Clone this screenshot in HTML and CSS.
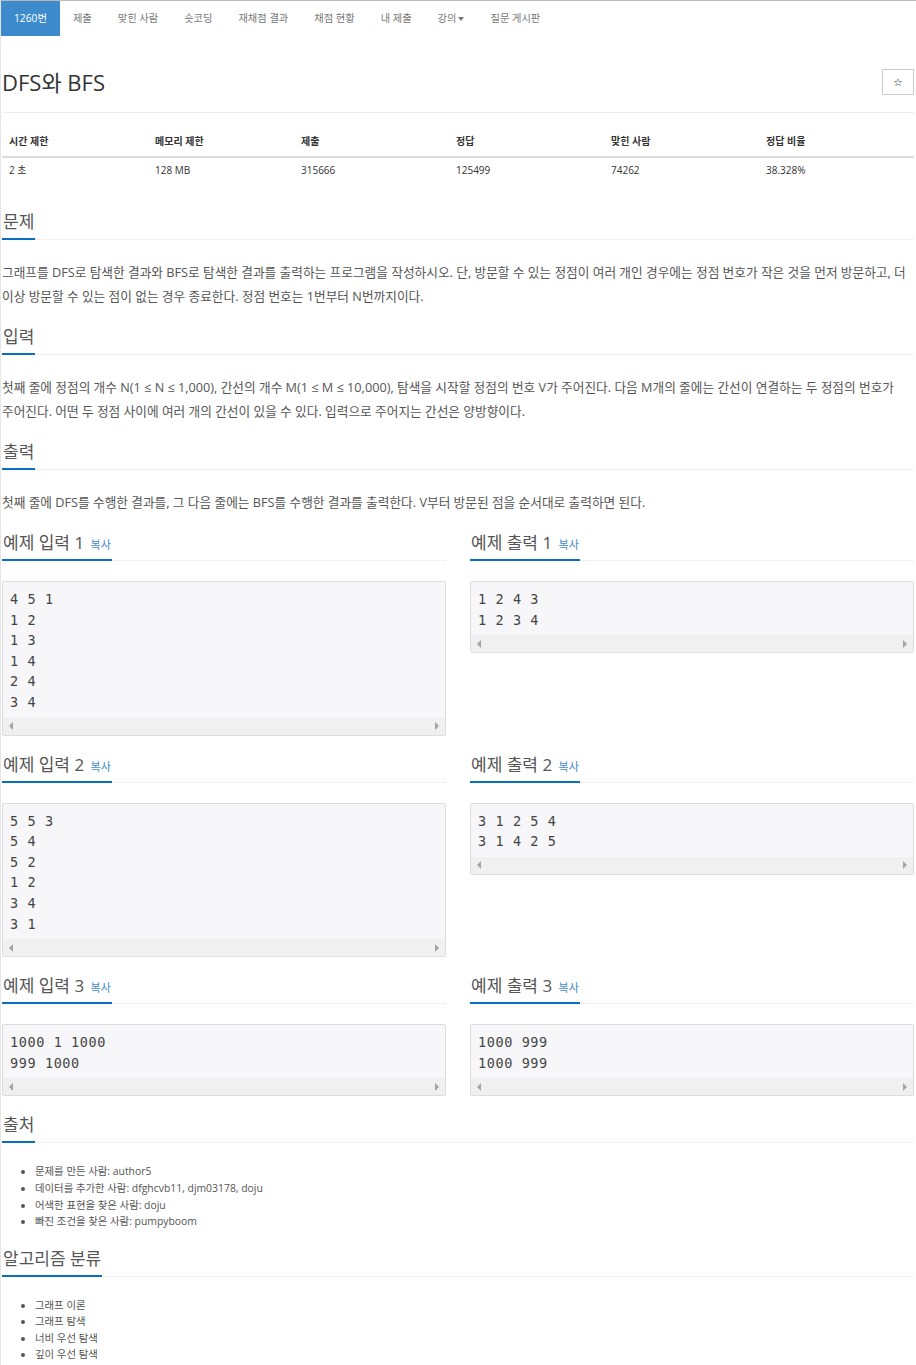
FILE: index.html
```html
<!DOCTYPE html>
<html>
<head>
  <title>1260번: DFS와 BFS</title>
  <meta charset="UTF-8">
  <meta name="viewport" content="width=device-width, initial-scale=1.0">
  <link rel="stylesheet" href="styles.css">
</head>
<body>
  <div class="topbar">
    <ul class="problem-menu">
      <li class="active"><a href="#">1260번</a></li>
      <li><a href="#">제출</a></li>
      <li><a href="#">맞힌 사람</a></li>
      <li><a href="#">숏코딩</a></li>
      <li><a href="#">재채점 결과</a></li>
      <li><a href="#">채점 현황</a></li>
      <li><a href="#">내 제출</a></li>
      <li><a href="#">강의<span class="caret"></span></a></li>
      <li><a href="#">질문 게시판</a></li>
    </ul>
  </div>

  <div class="container">
    <div class="page-header">
      <h1>DFS와 BFS</h1>
      <button type="button" class="star-btn">☆</button>
    </div>

    <table class="problem-info">
      <thead>
        <tr>
          <th class="c1">시간 제한</th>
          <th class="c2">메모리 제한</th>
          <th class="c3">제출</th>
          <th class="c4">정답</th>
          <th class="c5">맞힌 사람</th>
          <th>정답 비율</th>
        </tr>
      </thead>
      <tbody>
        <tr>
          <td>2 초</td>
          <td>128 MB</td>
          <td>315666</td>
          <td>125499</td>
          <td>74262</td>
          <td>38.328%</td>
        </tr>
      </tbody>
    </table>

    <section class="problem-section">
      <div class="headline"><h2>문제</h2></div>
      <p>그래프를 DFS로 탐색한 결과와 BFS로 탐색한 결과를 출력하는 프로그램을 작성하시오. 단, 방문할 수 있는 정점이 여러 개인 경우에는 정점 번호가 작은 것을 먼저 방문하고, 더 이상 방문할 수 있는 점이 없는 경우 종료한다. 정점 번호는 1번부터 N번까지이다.</p>
    </section>

    <section class="problem-section">
      <div class="headline"><h2>입력</h2></div>
      <p>첫째 줄에 정점의 개수 N(1 ≤ N ≤ 1,000), 간선의 개수 M(1 ≤ M ≤ 10,000), 탐색을 시작할 정점의 번호 V가 주어진다. 다음 M개의 줄에는 간선이 연결하는 두 정점의 번호가 주어진다. 어떤 두 정점 사이에 여러 개의 간선이 있을 수 있다. 입력으로 주어지는 간선은 양방향이다.</p>
    </section>

    <section class="problem-section">
      <div class="headline"><h2>출력</h2></div>
      <p>첫째 줄에 DFS를 수행한 결과를, 그 다음 줄에는 BFS를 수행한 결과를 출력한다. V부터 방문된 점을 순서대로 출력하면 된다.</p>
    </section>

    <div class="samples">
      <section class="problem-section">
        <div class="headline"><h2>예제 입력 1 <a href="#" class="copy">복사</a></h2></div>
        <div class="sample-box">
          <pre>4 5 1
1 2
1 3
1 4
2 4
3 4</pre>
          <div class="scrollbar"><span class="arrow-left"></span><span class="arrow-right"></span></div>
        </div>
      </section>
      <section class="problem-section">
        <div class="headline"><h2>예제 출력 1 <a href="#" class="copy">복사</a></h2></div>
        <div class="sample-box">
          <pre>1 2 4 3
1 2 3 4</pre>
          <div class="scrollbar"><span class="arrow-left"></span><span class="arrow-right"></span></div>
        </div>
      </section>

      <section class="problem-section">
        <div class="headline"><h2>예제 입력 2 <a href="#" class="copy">복사</a></h2></div>
        <div class="sample-box">
          <pre>5 5 3
5 4
5 2
1 2
3 4
3 1</pre>
          <div class="scrollbar"><span class="arrow-left"></span><span class="arrow-right"></span></div>
        </div>
      </section>
      <section class="problem-section">
        <div class="headline"><h2>예제 출력 2 <a href="#" class="copy">복사</a></h2></div>
        <div class="sample-box">
          <pre>3 1 2 5 4
3 1 4 2 5</pre>
          <div class="scrollbar"><span class="arrow-left"></span><span class="arrow-right"></span></div>
        </div>
      </section>

      <section class="problem-section">
        <div class="headline"><h2>예제 입력 3 <a href="#" class="copy">복사</a></h2></div>
        <div class="sample-box">
          <pre>1000 1 1000
999 1000</pre>
          <div class="scrollbar"><span class="arrow-left"></span><span class="arrow-right"></span></div>
        </div>
      </section>
      <section class="problem-section">
        <div class="headline"><h2>예제 출력 3 <a href="#" class="copy">복사</a></h2></div>
        <div class="sample-box">
          <pre>1000 999
1000 999</pre>
          <div class="scrollbar"><span class="arrow-left"></span><span class="arrow-right"></span></div>
        </div>
      </section>
    </div>

    <section class="problem-section">
      <div class="headline"><h2>출처</h2></div>
      <ul class="plain-list">
        <li>문제를 만든 사람: author5</li>
        <li>데이터를 추가한 사람: dfghcvb11, djm03178, doju</li>
        <li>어색한 표현을 찾은 사람: doju</li>
        <li>빠진 조건을 찾은 사람: pumpyboom</li>
      </ul>
    </section>

    <section class="problem-section">
      <div class="headline"><h2>알고리즘 분류</h2></div>
      <ul class="plain-list">
        <li>그래프 이론</li>
        <li>그래프 탐색</li>
        <li>너비 우선 탐색</li>
        <li>깊이 우선 탐색</li>
      </ul>
    </section>
  </div>
</body>
</html>
```

FILE: styles.css
```css
/* Reset styles */
* {
  margin: 0;
  padding: 0;
  box-sizing: border-box;
}

/* Base styles */
body {
  font-family: 'Open Sans', 'Noto Sans CJK KR', sans-serif;
  background-color: #fff;
  color: #555;
  font-size: 12.7px;
  line-height: 1.5;
  border-top: 1px solid #b8b8b8;
  border-left: 1px solid #e6e6e6;
}

a {
  text-decoration: none;
}

/* Top menu */
.topbar {
  height: 35px;
}

.problem-menu {
  list-style: none;
  display: flex;
  height: 35px;
}

.problem-menu a {
  display: block;
  height: 35px;
  line-height: 35px;
  padding: 0 13px;
  font-size: 10.25px;
  color: #777;
}

.problem-menu .active a {
  background-color: #3d8bcd;
  color: #fff;
}

.caret {
  display: inline-block;
  width: 0;
  height: 0;
  margin-left: 2px;
  vertical-align: middle;
  border-top: 4px solid #777;
  border-left: 3px solid transparent;
  border-right: 3px solid transparent;
}

/* Layout */
.container {
  padding: 0 2px 30px 1px;
}

.page-header {
  display: flex;
  align-items: center;
  justify-content: space-between;
  margin-top: 32px;
  padding-bottom: 16px;
  border-bottom: 1px solid #eee;
}

.page-header h1 {
  font-size: 22px;
  font-weight: 400;
  color: #333;
  line-height: 28px;
}

.star-btn {
  width: 32px;
  height: 26px;
  background-color: #fff;
  border: 1px solid #ccc;
  font-size: 11px;
  color: #333;
  font-family: 'DejaVu Sans', sans-serif;
  cursor: pointer;
}

/* Info table */
.problem-info {
  width: 100%;
  border-collapse: collapse;
  margin-top: 13px;
  margin-bottom: 26px;
  font-size: 10px;
  color: #333;
}

.problem-info th,
.problem-info td {
  text-align: left;
  padding: 7px 7px;
  line-height: 16px;
}

.problem-info th {
  font-weight: 700;
  border-bottom: 2px solid #ddd;
}

.problem-info td {
  padding-top: 4px;
  padding-bottom: 6px;
}

.problem-info .c1 { width: 146px; }
.problem-info .c2 { width: 146px; }
.problem-info .c3 { width: 155px; }
.problem-info .c4 { width: 155px; }
.problem-info .c5 { width: 155px; }

/* Sections */
.problem-section {
  margin-top: 17px;
}

.headline {
  border-bottom: 1px dotted #e4e4e4;
  margin-bottom: 20px;
}

.headline h2 {
  display: inline-block;
  font-size: 17px;
  font-weight: 400;
  color: #555;
  line-height: 24px;
  padding: 0 1px 4px;
  margin-bottom: -1px;
  border-bottom: 2px solid #0a6fc0;
}

.headline .copy {
  font-size: 11px;
  line-height: 1;
  margin-left: 2px;
  color: #428bca;
}

.problem-section p {
  line-height: 24px;
  word-break: keep-all;
}

/* Samples */
.samples {
  display: grid;
  grid-template-columns: 1fr 1fr;
  column-gap: 24px;
  align-items: start;
}

.sample-box {
  border: 1px solid #ddd;
  border-radius: 2px;
  background-color: #f7f7f9;
}

.sample-box pre {
  font-family: 'DejaVu Sans Mono', monospace;
  font-size: 13.5px;
  line-height: 20.6px;
  letter-spacing: 0.6px;
  color: #444;
  padding: 7px 7px 5px;
}

.scrollbar {
  height: 17px;
  background-color: #f0f0f0;
  display: flex;
  align-items: center;
  justify-content: space-between;
  padding: 0 6px;
}

.arrow-left {
  border-right: 4px solid #a3a3a3;
  border-top: 4px solid transparent;
  border-bottom: 4px solid transparent;
}

.arrow-right {
  border-left: 4px solid #a3a3a3;
  border-top: 4px solid transparent;
  border-bottom: 4px solid transparent;
}

/* Lists */
.plain-list {
  padding-left: 33px;
  font-size: 10.4px;
  line-height: 16.6px;
  color: #555;
}
```
